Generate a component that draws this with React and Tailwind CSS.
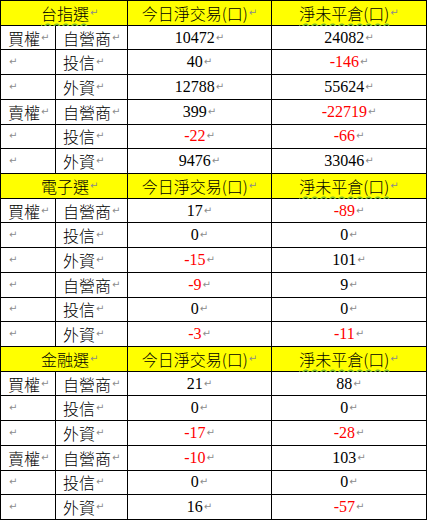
import React from "react";

const CJK = { fontFamily: '"Noto Sans CJK TC", "Noto Sans CJK SC", sans-serif' };

const sections = [
  {
    title: "台指選",
    wavyTitle: true,
    rows: [
      ["買權", "自營商", "10472", "24082"],
      ["", "投信", "40", "-146"],
      ["", "外資", "12788", "55624"],
      ["賣權", "自營商", "399", "-22719"],
      ["", "投信", "-22", "-66"],
      ["", "外資", "9476", "33046"],
    ],
  },
  {
    title: "電子選",
    wavyTitle: false,
    rows: [
      ["買權", "自營商", "17", "-89"],
      ["", "投信", "0", "0"],
      ["", "外資", "-15", "101"],
      ["", "自營商", "-9", "9"],
      ["", "投信", "0", "0"],
      ["", "外資", "-3", "-11"],
    ],
  },
  {
    title: "金融選",
    wavyTitle: false,
    rows: [
      ["買權", "自營商", "21", "88"],
      ["", "投信", "0", "0"],
      ["", "外資", "-17", "-28"],
      ["賣權", "自營商", "-10", "103"],
      ["", "投信", "0", "0"],
      ["", "外資", "16", "-57"],
    ],
  },
];

function Mark() {
  return (
    <span className="text-[10px] leading-none text-[#8c8c8c] ml-px" style={{ fontFamily: '"DejaVu Sans", sans-serif' }}>
      ↵
    </span>
  );
}

function Num({ v }) {
  const neg = v.startsWith("-");
  return (
    <div className="bg-white flex items-center justify-center">
      <span
        className={`text-[16px] leading-none ${neg ? "text-[#ff0000]" : "text-black"}`}
        style={{ fontFamily: '"Liberation Serif", serif' }}
      >
        {v}
      </span>
      <Mark />
    </div>
  );
}

function Label({ t }) {
  return (
    <div className="bg-white flex items-center pl-[7px]">
      {t ? (
        <span className="text-[16px] leading-none text-black font-light" style={CJK}>
          {t}
        </span>
      ) : null}
      <Mark />
    </div>
  );
}

export default function App() {
  const cells = [];
  sections.forEach((s, si) => {
    cells.push(
      <div key={`h${si}a`} className="col-span-2 bg-[#ffff00] flex items-center justify-start pl-[40px]">
        <span
          className={`text-[16px] leading-none text-black font-light ${s.wavyTitle ? "underline decoration-wavy decoration-[#7cbf2a] underline-offset-[3px]" : ""}`}
          style={CJK}
        >
          {s.title}
        </span>
        <Mark />
      </div>
    );
    cells.push(
      <div key={`h${si}b`} className="bg-[#ffff00] flex items-center justify-center">
        <span className="text-[16px] leading-none text-black font-light" style={CJK}>
          今日淨交易(口)
        </span>
        <Mark />
      </div>
    );
    cells.push(
      <div key={`h${si}c`} className="bg-[#ffff00] flex items-center justify-center">
        <span
          className="text-[16px] leading-none text-black font-light underline decoration-wavy decoration-[#7cbf2a] underline-offset-[3px]"
          style={CJK}
        >
          淨未平倉(口)
        </span>
        <Mark />
      </div>
    );
    s.rows.forEach((r, ri) => {
      cells.push(<Label key={`r${si}${ri}a`} t={r[0]} />);
      cells.push(<Label key={`r${si}${ri}b`} t={r[1]} />);
      cells.push(<Num key={`r${si}${ri}c`} v={r[2]} />);
      cells.push(<Num key={`r${si}${ri}d`} v={r[3]} />);
    });
  });

  return (
    <div className="w-[428px] h-[520px] bg-white">
      <div className="w-[427px] h-[520px] bg-black p-px grid grid-cols-[54px_71px_143px_154px] grid-rows-[repeat(21,minmax(0,1fr))] gap-px">
        {cells}
      </div>
    </div>
  );
}
